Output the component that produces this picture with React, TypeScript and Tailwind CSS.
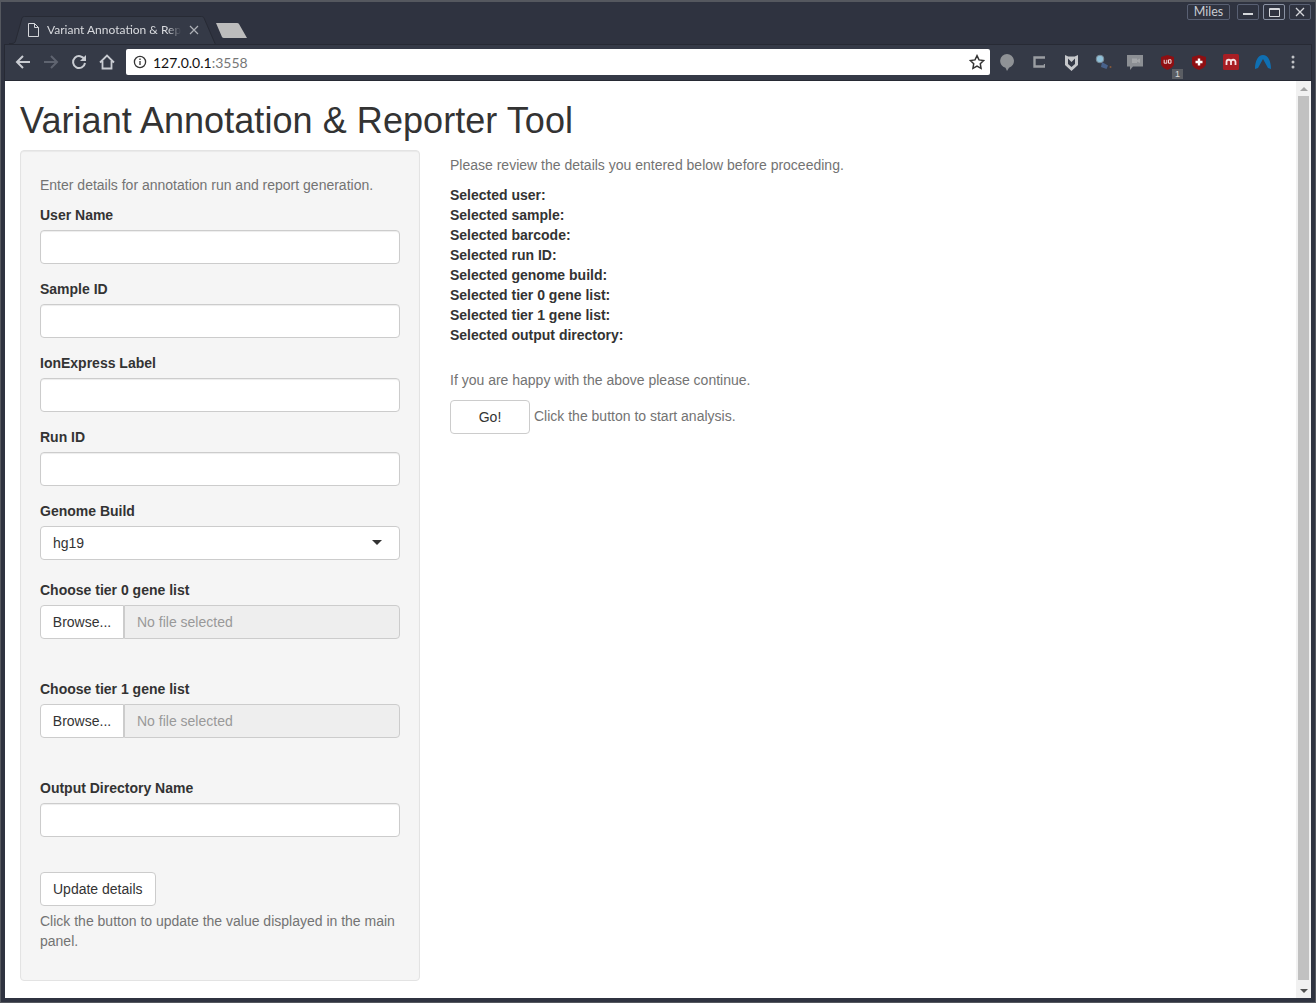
import React from "react";

const labelCls = "block text-[14px] leading-5 font-bold text-[#333] mb-[5px]";
const inputCls =
  "block w-full h-[34px] bg-white border border-[#ccc] rounded-[4px] px-3 text-[14px] text-[#555] shadow-[inset_0_1px_1px_rgba(0,0,0,0.075)]";
const btnCls =
  "h-[34px] bg-white border border-[#ccc] text-[14px] leading-5 text-[#333] rounded-[4px]";

const TextField = ({ label }: { label: string }) => (
  <div className="mb-[15px]">
    <label className={labelCls}>{label}</label>
    <input type="text" className={inputCls} />
  </div>
);

const FileField = ({ label }: { label: string }) => (
  <div className="mb-10">
    <label className={labelCls}>{label}</label>
    <div className="flex h-[34px]">
      <button className={`${btnCls} w-[84px] rounded-r-none shrink-0`}>Browse...</button>
      <div className="flex-1 bg-[#eee] border border-[#ccc] rounded-r-[4px] pl-3 text-[14px] leading-[32px] text-[#999]">
        No file selected
      </div>
    </div>
  </div>
);

const WinBtn = ({ active, children }: { active?: boolean; children: React.ReactNode }) => (
  <div
    className={`w-[22px] h-[16px] rounded-[2px] border flex items-center justify-center ${
      active ? "border-[#8a92a3]" : "border-[#596073]"
    }`}
  >
    {children}
  </div>
);

const Slot = ({ children, className = "w-[32px]" }: { children: React.ReactNode; className?: string }) => (
  <div className={`${className} relative flex justify-center`}>{children}</div>
);

const Toolbar = () => (
  <div className="h-[37px] flex items-center pb-[1px] mx-[3px] border border-[#272a34] bg-[#353a47]">
    <svg width="16" height="16" viewBox="0 0 16 16" className="ml-[10px]" fill="none" stroke="#c9ccd2" strokeWidth="2">
      <path d="M15 8H2M8 2L2 8l6 6" />
    </svg>
    <svg width="16" height="16" viewBox="0 0 16 16" className="ml-[12px]" fill="none" stroke="#5f6470" strokeWidth="2">
      <path d="M1 8h13M8 2l6 6-6 6" />
    </svg>
    <svg width="16" height="16" viewBox="0 0 16 16" className="ml-[12px]" fill="none" stroke="#c9ccd2" strokeWidth="2">
      <path d="M13.5 5.500A6 6 0 1 0 14 9" />
      <path d="M15 1v6H9z" fill="#c9ccd2" stroke="none" />
    </svg>
    <svg width="16" height="16" viewBox="0 0 16 16" className="ml-[12px]" fill="none" stroke="#c9ccd2" strokeWidth="1.800">
      <path d="M1 8.500L8 1.500l7 7M3.500 7v7.500h9V7" />
    </svg>
    <div className="ml-[11px] w-[864px] shrink-0 h-[26px] bg-white rounded-[2px] flex items-center pl-[7px] pr-[5px]">
      <svg width="14" height="14" viewBox="0 0 14 14" fill="none" stroke="#333" strokeWidth="1.300">
        <circle cx="7" cy="7" r="5.600" />
        <path d="M7 6v4M7 3.600v1.400" />
      </svg>
      <span className="ml-[6px] text-[14px] font-['Lato',sans-serif] text-[#111]">
        127.0.0.1<span className="text-[#777]">:3558</span>
      </span>
      <svg width="16" height="16" viewBox="0 0 24 24" className="ml-auto" fill="none" stroke="#333" strokeWidth="2.200">
        <path d="M12 2.500l3 6.300 6.900.9-5 4.800 1.200 6.900-6.100-3.400-6.100 3.400 1.200-6.900-5-4.800 6.900-.9z" />
      </svg>
    </div>
    <div className="flex items-center ml-[1px]">
      <Slot>
        <svg width="14" height="17" viewBox="0 0 14 17">
          <path d="M7 0a7 7 0 0 1 2 13.700L7 17l-1.500-3.200A7 7 0 0 1 7 0z" fill="#8f9296" />
        </svg>
      </Slot>
      <Slot>
        <svg width="12" height="12" viewBox="0 0 12 12" fill="none" stroke="#9a9da2" strokeWidth="2.400">
          <path d="M12 1.500H1.500v9H12V8" />
        </svg>
      </Slot>
      <Slot>
        <svg width="13" height="17" viewBox="0 0 13 17">
          <path d="M0 1l3.200 1.500h6.600L13 1v10l-6.500 6L0 11z" fill="#c6c8cb" />
          <path d="M3 4.500L6.500 8 10 4.500V10l-3.500 3L3 10z" fill="#353a47" />
        </svg>
      </Slot>
      <Slot>
        <svg width="17" height="16" viewBox="0 0 17 16">
          <circle cx="5" cy="5" r="3.800" fill="#8fc0d8" stroke="#7a8a96" />
          <path d="M7 8l6 3.500-1.500 3.500L6 13z" fill="#48628c" />
          <circle cx="15.500" cy="13" r="1" fill="#8a5a3a" />
        </svg>
      </Slot>
      <Slot>
        <svg width="16" height="15" viewBox="0 0 16 15">
          <path d="M0 0h16v11.500H6L3 15v-3.500H0z" fill="#8c8f94" />
          <path d="M5 3.500h5v4.500H5zM10 5l3-1.500V8l-3-1.500z" fill="#a4a6a9" />
        </svg>
      </Slot>
      <Slot>
        <svg width="13" height="15" viewBox="0 0 13 15">
          <path d="M6.500 0L13 2v6.500c0 2.800-3 4.800-6.500 6.500C3 13.300 0 11.300 0 8.500V2z" fill="#8e0f12" />
          <path d="M3.200 4.800v3.400h2.600V4.800M7.500 4.800h2.500v3.400H7.500z" fill="none" stroke="#f2dede" />
        </svg>
        <div className="absolute left-[21px] top-[14px] w-[11px] h-[10px] bg-[#5b5e64] text-[#ddd] text-[9px] leading-[10px] text-center font-['Liberation_Sans',sans-serif]">
          1
        </div>
      </Slot>
      <Slot>
        <svg width="14" height="15" viewBox="0 0 14 15">
          <path d="M7 0l7 2v6.500c0 2.800-3 4.800-7 6.500-4-1.700-7-3.700-7-6.500V2z" fill="#8e0f12" />
          <path d="M7 3.500v7M3.500 7h7" stroke="#fff" strokeWidth="2.400" />
        </svg>
      </Slot>
      <Slot>
        <svg width="16" height="16" viewBox="0 0 16 16">
          <rect width="16" height="16" rx="1.500" fill="#a81e24" />
          <path d="M3.500 11V8a2.200 2.200 0 0 1 4.500 0 2.200 2.200 0 0 1 4.500 0v3M8 8v3" fill="none" stroke="#f7e3e4" strokeWidth="1.800" />
        </svg>
      </Slot>
      <Slot>
        <svg width="16" height="14" viewBox="0 0 16 14">
          <path d="M0 14C0 6 3 0 8 0s8 6 8 14l-3-1-5-9-5 9z" fill="#0f6fb2" />
        </svg>
      </Slot>
      <Slot className="w-[28px]">
        <svg width="4" height="14" viewBox="0 0 4 14" fill="#c0c2c6">
          <circle cx="2" cy="2" r="1.500" />
          <circle cx="2" cy="7" r="1.500" />
          <circle cx="2" cy="12" r="1.500" />
        </svg>
      </Slot>
    </div>
  </div>
);

export default function App() {
  return (
    <div className="w-[1316px] h-[1003px] bg-[#2f3340] border border-t-2 border-[#55585f] overflow-hidden flex flex-col font-['Liberation_Sans',Arial,sans-serif]">
      {/* tab strip */}
      <div className="h-[42px] shrink-0 flex justify-between">
        <div className="flex items-end pl-[8px]">
          <div className="relative w-[208px] h-[28px]">
            <svg width="208" height="28" viewBox="0 0 208 28" className="absolute inset-0">
              <path d="M0 27.500h3c2 0 3-1 3.500-2.500L13 2c.5-1 1-1.500 2.500-1.500h177c1.500 0 2 .5 2.500 1.500l11 25.500v1H0z" fill="#353a47" stroke="#272a34" />
            </svg>
            <div className="relative flex items-center h-full pl-[19px]">
              <svg width="11" height="14" viewBox="0 0 11 14" fill="none" stroke="#d5d7db" className="shrink-0">
                <path d="M.5.5h6l4 4v9H.5zM6.500.5v4h4" />
              </svg>
              <span className="ml-[8px] w-[134px] overflow-hidden whitespace-nowrap text-[12px] font-['Lato',sans-serif] text-[#d8dade] [mask-image:linear-gradient(to_right,black_90%,transparent)]">
                Variant Annotation &amp; Reporter Tool
              </span>
              <svg width="10" height="10" viewBox="0 0 10 10" className="ml-[8px]" stroke="#aeb1b7" strokeWidth="1.200">
                <path d="M1 1l8 8M9 1L1 9" />
              </svg>
            </div>
          </div>
          <svg width="32" height="15" viewBox="0 0 32 15" className="-ml-[2px] mb-[6px]">
            <path d="M1 0H22Q23.500 0 24 1L32 15H9Q7.500 15 7 14Z" fill="#bcbcbc" />
          </svg>
        </div>
        <div className="flex gap-[7px] pt-[2px] pr-[4px]">
          <div className="w-[43px] h-[16px] rounded-[2px] border border-[#596073] text-[12.500px] leading-[14px] text-center text-[#c9ccd2] font-['Lato',sans-serif]">
            Miles
          </div>
          <div className="flex gap-[4px]">
            <WinBtn>
              <div className="w-[10px] h-[2px] mt-[4px] bg-[#d5d7db]" />
            </WinBtn>
            <WinBtn active>
              <div className="w-[11px] h-[9px] border border-t-2 border-[#d5d7db] rounded-[1px]" />
            </WinBtn>
            <WinBtn>
              <svg width="10" height="10" viewBox="0 0 10 10" stroke="#d5d7db" strokeWidth="1.300">
                <path d="M1 1l8 8M9 1L1 9" />
              </svg>
            </WinBtn>
          </div>
        </div>
      </div>
      <Toolbar />
      {/* page */}
      <div className="mx-[4px] w-[1306px] h-[917px] shrink-0 bg-white flex">
        <div className="flex-1 px-[15px] min-w-0">
          <h1 className="mt-5 mb-[10px] text-[36px] leading-[39px] tracking-[0.06px] font-normal text-[#333]">
            Variant Annotation &amp; Reporter Tool
          </h1>
          <div className="flex">
            <div className="w-[400px] h-[831px] shrink-0 bg-[#f5f5f5] border border-[#e3e3e3] rounded-[4px] p-[19px] shadow-[inset_0_1px_1px_rgba(0,0,0,0.05)]">
              <p className="mt-[5px] mb-[10px] text-[14px] leading-5 text-[#737373]">
                Enter details for annotation run and report generation.
              </p>
              <TextField label="User Name" />
              <TextField label="Sample ID" />
              <TextField label="IonExpress Label" />
              <TextField label="Run ID" />
              <div className="mb-5">
                <label className={labelCls}>Genome Build</label>
                <div className="relative h-[34px] bg-white border border-[#ccc] rounded-[4px] pl-3 text-[14px] leading-[32px] text-[#333]">
                  hg19
                  <div className="absolute right-[17px] top-[13px] border-x-[5px] border-x-transparent border-t-[5px] border-t-[#333]" />
                </div>
              </div>
              <FileField label="Choose tier 0 gene list" />
              <FileField label="Choose tier 1 gene list" />
              <div className="mb-[35px]">
                <label className={labelCls}>Output Directory Name</label>
                <input type="text" className={inputCls} />
              </div>
              <button className={`${btnCls} px-3 block`}>Update details</button>
              <p className="mt-[5px] text-[14px] leading-5 text-[#737373]">
                Click the button to update the value displayed in the main panel.
              </p>
            </div>
            <div className="pl-[30px] pt-[5px] text-[14px] leading-5 text-[#333]">
              <p className="text-[#737373] mb-[10px]">Please review the details you entered below before proceeding.</p>
              <div className="font-bold">
                <div>Selected user:</div>
                <div>Selected sample:</div>
                <div>Selected barcode:</div>
                <div>Selected run ID:</div>
                <div>Selected genome build:</div>
                <div>Selected tier 0 gene list:</div>
                <div>Selected tier 1 gene list:</div>
                <div>Selected output directory:</div>
              </div>
              <p className="mt-[25px] mb-[10px] text-[#737373]">If you are happy with the above please continue.</p>
              <div className="flex items-center">
                <button className={`${btnCls} w-[80px]`}>Go!</button>
                <span className="ml-1 mb-[2px] text-[#737373]">Click the button to start analysis.</span>
              </div>
            </div>
          </div>
        </div>
        {/* scrollbar */}
        <div className="w-[15px] shrink-0 bg-[#f1f1f1] flex flex-col items-center">
          <div className="h-[15px] flex items-center justify-center">
            <div className="border-x-[4px] border-x-transparent border-b-[4px] border-b-[#a3a3a3]" />
          </div>
          <div className="w-[11px] h-[884px] bg-[#c1c1c1]" />
          <div className="h-[18px] pt-[3px] flex items-center justify-center">
            <div className="border-x-[4px] border-x-transparent border-t-[4px] border-t-[#505050]" />
          </div>
        </div>
      </div>
    </div>
  );
}
